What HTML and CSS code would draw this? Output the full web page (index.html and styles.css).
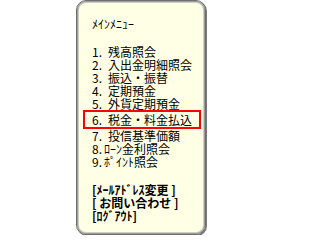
FILE: index.html
```html
<!DOCTYPE html>
<html lang="ja">
<head>
<meta charset="utf-8">
<title>メインメニュー</title>
<link rel="stylesheet" href="styles.css">
</head>
<body>
<div class="panel">
  <div class="title">ﾒｲﾝﾒﾆｭｰ</div>
  <ul class="menu">
    <li class="item"><span class="num">1.</span>残高照会</li>
    <li class="item"><span class="num">2.</span>入出金明細照会</li>
    <li class="item"><span class="num">3.</span>振込・振替</li>
    <li class="item"><span class="num">4.</span>定期預金</li>
    <li class="item"><span class="num">5.</span>外貨定期預金</li>
    <li class="item hl"><span class="num">6.</span>税金・料金払込</li>
    <li class="item"><span class="num">7.</span>投信基準価額</li>
    <li class="item"><span class="num short">8.</span>ﾛｰﾝ金利照会</li>
    <li class="item"><span class="num short">9.</span>ﾎﾟｲﾝﾄ照会</li>
  </ul>
  <div class="links">
    <div class="link">[ﾒｰﾙｱﾄﾞﾚｽ変更 ]</div>
    <div class="link">[ お問い合わせ ]</div>
    <div class="link">[ﾛｸﾞｱｳﾄ]</div>
  </div>
</div>
</body>
</html>
```

FILE: styles.css
```css
html, body {
  margin: 0;
  padding: 0;
  background: #ffffff;
}

body {
  font-family: "Noto Sans CJK JP", sans-serif;
  font-size: 12px;
  line-height: 13px;
  color: #000000;
}

.panel {
  box-sizing: border-box;
  width: 130px;
  height: 235px;
  margin-left: 76px;
  padding: 16px 0 12px 15px;
  background: #ffffe6;
  border: 1px solid #6e6e6e;
  border-radius: 10px;
  box-shadow: inset 0 0 0 1px #9c9c9c, inset 0 0 0 2px #cfcfc4, 1px 1px 0 #7a7a7a;
}

.title {
  margin-bottom: 15px;
  white-space: nowrap;
}

.menu {
  list-style: none;
  margin: 0;
  padding: 0;
}

.item {
  white-space: nowrap;
}

.num {
  display: inline-block;
  width: 16px;
}

.num.short {
  width: 12px;
}

.hl {
  margin: 0 4px 0 -9px;
  padding: 1px 0 1px 7px;
  border: 2px solid #ff0000;
}

.links {
  margin-top: 15px;
  font-weight: bold;
}

.link {
  white-space: nowrap;
}
```
